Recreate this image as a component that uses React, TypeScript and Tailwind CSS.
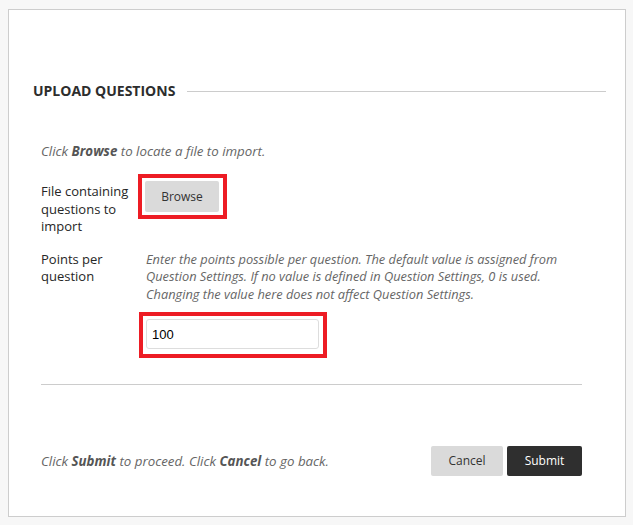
export default function App() {
  return (
    <div
      className="min-h-screen bg-[#f7f7f7] pt-[9px] pl-[8px]"
      style={{ fontFamily: '"Open Sans", "Liberation Sans", sans-serif' }}
    >
      <div className="w-[618px] h-[508px] border border-[#cdcdcd] bg-white">
        {/* section heading */}
        <div className="flex items-center pl-[24px] pr-[19px] pt-[71px]">
          <h2 className="text-[14px] font-bold uppercase leading-5 text-[#2d2d2d]">Upload Questions</h2>
          <div className="ml-3 h-px flex-1 bg-[#cccccc]" />
        </div>

        <div className="pl-[32px] w-[573px]">
          <p className="mt-[41px] text-[13.3px] italic leading-[18px] text-[#666]">
            Click <b className="font-bold text-[#555]">Browse</b> to locate a file to import.
          </p>

          {/* file row */}
          <div className="mt-[14px] flex">
            <label className="w-[97px] shrink-0 pt-[9px] text-[13px] leading-[17.5px] text-[#262626]">
              File containing questions to import
            </label>
            <div className="h-[45px] w-[89px] border-4 border-[#ed1c24] p-[3px]">
              <button className="h-[31px] w-[74px] rounded-[2px] bg-[#dadada] text-[12px] text-[#333]">Browse</button>
            </div>
          </div>

          {/* points row */}
          <div className="mt-[15px] flex">
            <label className="w-[97px] shrink-0 text-[13px] leading-[17.5px] text-[#262626]">
              Points per question
            </label>
            <div>
              <p className="w-[430px] pl-[8px] text-[12.8px] italic leading-[17.5px] text-[#666]">
                Enter the points possible per question. The default value is assigned from Question Settings. If no
                value is defined in Question Settings, 0 is used. Changing the value here does not affect Question
                Settings.
              </p>
              <div className="ml-px mt-[9px] h-[46px] w-[188px] border-4 border-[#ed1c24] p-[3px] pb-[5px]">
                <input
                  defaultValue="100"
                  className="h-[30px] w-[173px] rounded-[3px] border border-[#dddddd] px-[5px] text-[13px] text-black outline-none"
                  style={{ fontFamily: '"Liberation Sans", Arial, sans-serif' }}
                />
              </div>
            </div>
          </div>

          <div className="mt-[26px] h-px w-[541px] bg-[#cccccc]" />

          {/* footer */}
          <div className="mt-[61px] flex w-[541px] items-center justify-between">
            <p className="text-[13.3px] italic leading-[18px] text-[#666]">
              Click <b className="font-bold text-[#555]">Submit</b> to proceed. Click{" "}
              <b className="font-bold text-[#555]">Cancel</b> to go back.
            </p>
            <div className="flex gap-[4px]">
              <button className="h-[30px] w-[72px] rounded-[2px] bg-[#dadada] text-[12px] text-[#333]">Cancel</button>
              <button className="h-[30px] w-[75px] rounded-[2px] bg-[#2f2f2f] text-[12px] text-white">Submit</button>
            </div>
          </div>
        </div>
      </div>
    </div>
  );
}
